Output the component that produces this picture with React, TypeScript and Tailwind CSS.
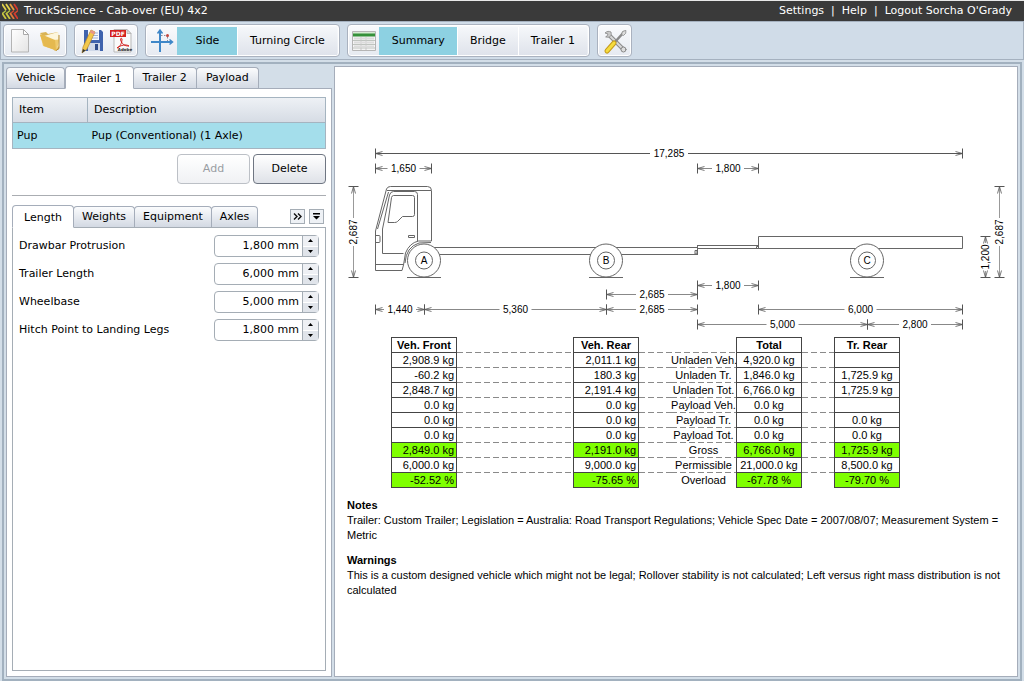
import type { ReactNode } from "react";
import clsx from "clsx";

const MAIN_TABS = ["Vehicle", "Trailer 1", "Trailer 2", "Payload"];
const DETAIL_TABS = ["Length", "Weights", "Equipment", "Axles"];

const LENGTHS = [
  { id: "drawbar", label: "Drawbar Protrusion", value: "1,800 mm" },
  { id: "length", label: "Trailer Length", value: "6,000 mm" },
  { id: "wheelbase", label: "Wheelbase", value: "5,000 mm" },
  { id: "hitch", label: "Hitch Point to Landing Legs", value: "1,800 mm" },
];

interface LoadRow {
  label: string;
  front: string;
  rear: string;
  total: string;
  trailer: string;
  ok?: boolean;
}

const LOADS: LoadRow[] = [
  { label: "Unladen Veh.", front: "2,908.9 kg", rear: "2,011.1 kg", total: "4,920.0 kg", trailer: "" },
  { label: "Unladen Tr.", front: "-60.2 kg", rear: "180.3 kg", total: "1,846.0 kg", trailer: "1,725.9 kg" },
  { label: "Unladen Tot.", front: "2,848.7 kg", rear: "2,191.4 kg", total: "6,766.0 kg", trailer: "1,725.9 kg" },
  { label: "Payload Veh.", front: "0.0 kg", rear: "0.0 kg", total: "0.0 kg", trailer: "" },
  { label: "Payload Tr.", front: "0.0 kg", rear: "0.0 kg", total: "0.0 kg", trailer: "0.0 kg" },
  { label: "Payload Tot.", front: "0.0 kg", rear: "0.0 kg", total: "0.0 kg", trailer: "0.0 kg" },
  { label: "Gross", front: "2,849.0 kg", rear: "2,191.0 kg", total: "6,766.0 kg", trailer: "1,725.9 kg", ok: true },
  { label: "Permissible", front: "6,000.0 kg", rear: "9,000.0 kg", total: "21,000.0 kg", trailer: "8,500.0 kg" },
  { label: "Overload", front: "-52.52 %", rear: "-75.65 %", total: "-67.78 %", trailer: "-79.70 %", ok: true },
];

/* ─── Icons ─── */

function Logo() {
  return (
    <svg className="h-4 w-4" viewBox="0 0 16 16" fill="none" strokeWidth="1.800">
      <path d="M0 1l4 6M4 1l4 6" stroke="#e3d24a" />
      <path d="M8 1l4 6" stroke="#e89a3c" />
      <path d="M12 1l4 6" stroke="#d8392f" />
      <path d="M4 7.500l-3.500 3M8 7.500l-3.500 3" stroke="#b5c542" strokeWidth="1.400" />
      <path d="M12 7.500l-3.500 3M16 7.500l-3.500 3" stroke="#d8492f" strokeWidth="1.400" />
      <path d="M0 10l4 6M4 10l4 6" stroke="#c9c640" />
      <path d="M8 10l4 6" stroke="#e0793a" />
      <path d="M12 10l4 6" stroke="#d8392f" />
    </svg>
  );
}

function NewIcon() {
  return (
    <svg className="h-7 w-6" viewBox="0 0 24 28">
      <defs>
        <linearGradient id="page" x1="0" y1="0" x2="1" y2="1">
          <stop offset="0" stopColor="#fff" />
          <stop offset="1" stopColor="#e4e4e4" />
        </linearGradient>
      </defs>
      <path d="M2.500 2.500h12l5 5v17.500h-17z" fill="url(#page)" stroke="#b4b4b4" />
      <path d="M14.500 2.500v5h5z" fill="#fff" stroke="#a8a8a8" />
    </svg>
  );
}

function OpenIcon() {
  return (
    <svg className="h-7 w-6" viewBox="0 0 24 28">
      <path d="M2 6l6-1 2 2 10-2 1 17-4 2z" fill="#d9b356" />
      <path d="M6 9l14-4 1 14-4 4z" fill="#fdf6dc" />
      <path d="M2 7l3 12 14 4.500 2-11-12 1-3-5z" fill="#efca6b" />
      <path d="M2 8l4 11 12 4.500L17 13 5 8z" fill="#e5b94f" />
      <path d="M18 23.500l3-2V8" fill="none" stroke="#b98c2c" />
    </svg>
  );
}

function SaveIcon() {
  return (
    <svg className="h-7 w-6" viewBox="0 0 24 28">
      <path d="M4 3h17l2 2v19H4z" fill="#3f63ad" />
      <path d="M8 3h11v10H8z" fill="#f5f8fd" />
      <path d="M9 6h9M9 8.500h9M9 11h9" stroke="#9fb2d6" />
      <path d="M8 16h12v8H8z" fill="#cfd8e8" />
      <path d="M15 17h3v6h-3z" fill="#2f4c8a" />
      <path d="M11 3l4 2-8 17-5 4 1-6z" fill="#f2c84b" stroke="#b9872a" strokeWidth=".7" />
      <path d="M11 3l4 2-1 2.500-4-2z" fill="#e9968a" />
      <path d="M2 26l1-4 2.500 1.500z" fill="#333" />
    </svg>
  );
}

function PdfIcon() {
  return (
    <svg className="h-7 w-6" viewBox="0 0 24 28">
      <path d="M5 2.500h13l4 4v18.500H5z" fill="#fafafa" stroke="#b9b9b9" />
      <path d="M18 2.500v4h4z" fill="#ddd" stroke="#aaa" strokeWidth=".7" />
      <path d="M1 3h16v7H1z" fill="#d3201f" />
      <text x="9" y="9" textAnchor="middle" fontSize="6" fontWeight="bold" fill="#fff">PDF</text>
      <path d="M8 21c3-1 5-5 5-9-1-2-2 0-1 2 2 4 4 5 8 5-3-2-8-1-12 2z" fill="none" stroke="#d3201f" />
      <text x="16" y="24" textAnchor="middle" fontSize="4" fontWeight="bold" fill="#222">Adobe</text>
    </svg>
  );
}

function AxesIcon() {
  return (
    <svg className="h-7 w-6" viewBox="0 0 24 28" fill="none">
      <path d="M9 4v21M0 15h21" stroke="#3f87c8" strokeWidth="2" />
      <path d="M6.500 6.500L9 3 11.500 6.500M18.500 12.500l3 2.500-3 2.500" stroke="#3f87c8" strokeWidth="1.500" />
      <path d="M10 8.500h6M16.500 10v4" stroke="#8c8c9c" strokeDasharray="1.500 1.500" />
      <circle cx="16.500" cy="8.500" r="1.500" fill="#c4453c" />
    </svg>
  );
}

function SheetIcon() {
  return (
    <svg className="h-7 w-6" viewBox="0 0 24 28">
      <path d="M.5 4.500h23v19H.5z" fill="#f4f4f4" stroke="#b5b5b5" />
      <path d="M1 5h22v2H1z" fill="#d5ead2" />
      <path d="M1 6.500h22v3H1z" fill="#35913a" />
      <path d="M1 13.500h22M1 17.500h22M1 21h22" stroke="#bfc4bf" />
      <path d="M9 10v13M14 10v13" stroke="#c6c6c6" />
      <path d="M2 11.500h20M2 15.500h20M2 19.500h20" stroke="#dcdcdc" strokeWidth="2" />
    </svg>
  );
}

function ToolsIcon() {
  return (
    <svg className="h-7 w-6" viewBox="0 0 24 28" fill="none" strokeLinecap="round">
      <path d="M7 9l13 13" stroke="#8b8b8b" strokeWidth="4" />
      <path d="M7 9l13 13" stroke="#d9d9d9" strokeWidth="2" />
      <path d="M3 10c4 1 6-1 5-5-2-1-4-1-6 1l3 1-1 2z" fill="#c9c9c9" stroke="#888" strokeWidth=".8" />
      <circle cx="20.500" cy="22.500" r="2.500" fill="#ddd" stroke="#888" />
      <path d="M21 5l-9 10" stroke="#8a8a8a" strokeWidth="2.500" />
      <path d="M22.500 3.500l-3 1-1 3 2 1 2-2z" fill="#ddd" stroke="#888" strokeWidth=".8" />
      <path d="M11 16l-7 8" stroke="#c59a1d" strokeWidth="5" />
      <path d="M11 16l-7 8" stroke="#f5dc3e" strokeWidth="3" />
    </svg>
  );
}

/* ─── Toolbar ─── */

function ToolGroup({ children }: { children: ReactNode }) {
  return (
    <div className="flex h-[33px] items-center rounded border border-[#aab2bf] bg-gradient-to-b from-[#fafbfd] to-[#e6eaf1] px-0.5 shadow-[inset_0_0_0_1px_#fff]">
      {children}
    </div>
  );
}

function IconButton({ label, children }: { label: string; children: ReactNode }) {
  return (
    <button type="button" aria-label={label} className="flex h-7 w-[29px] items-center justify-center">
      {children}
    </button>
  );
}

function ViewButton({ label, active }: { label: string; active?: boolean }) {
  return (
    <button
      type="button"
      className={clsx(
        "h-[28px] min-w-[60px] border-l px-3",
        active ? "border-[#8dd1e2] bg-[#8dd1e2]" : "border-white bg-gradient-to-b from-[#f5f7fa] to-[#dfe3eb]",
      )}
    >
      {label}
    </button>
  );
}

/* ─── Left panel ─── */

function Tab({ label, active, compact }: { label: string; active?: boolean; compact?: boolean }) {
  return (
    <button
      type="button"
      role="tab"
      aria-selected={!!active}
      className={clsx(
        "rounded-t border border-[#a5adba]",
        active
          ? "z-10 -mb-px h-[23px] border-b-white bg-white px-[11px] pt-0.5"
          : "-ml-px h-[21px] border-b-0 bg-gradient-to-b from-[#fbfcfd] to-[#d3d9e3] first:ml-0",
        !active && (compact ? "px-2" : "px-[9px]"),
      )}
    >
      {label}
    </button>
  );
}

function NumberField({ id, label, value }: { id: string; label: string; value: string }) {
  return (
    <div className="flex h-[22px] items-center justify-between">
      <label htmlFor={id}>{label}</label>
      <div className="flex h-[22px] w-[105px] rounded-sm border border-[#a5adb5] bg-white">
        <input id={id} defaultValue={value} className="w-0 min-w-0 flex-1 pr-[3px] text-right outline-none" />
        <div className="flex w-4 flex-col border-l border-[#a5adb5] bg-[#eef0f4]">
          <button type="button" aria-label={`Increase ${label}`} className="flex flex-1 items-center justify-center border-b border-white">
            <svg className="h-[3px] w-[5px]" viewBox="0 0 5 3"><path d="M0 3h5L2.500 0z" /></svg>
          </button>
          <button type="button" aria-label={`Decrease ${label}`} className="flex flex-1 items-center justify-center bg-[#e0e4ea]">
            <svg className="h-[3px] w-[5px]" viewBox="0 0 5 3"><path d="M0 0h5L2.500 3z" /></svg>
          </button>
        </div>
      </div>
    </div>
  );
}

function TrailerPanel() {
  return (
    <section className="flex flex-col">
      <div role="tablist" className="flex h-[22px] items-end">
        {MAIN_TABS.map((tab) => (
          <Tab key={tab} label={tab} active={tab === "Trailer 1"} />
        ))}
      </div>

      <div className="flex flex-1 flex-col border border-[#a5adba] bg-white px-[5px] pt-2 pb-[5px]">
        <table className="w-full border border-[#a5b4c0] text-left">
          <thead>
            <tr className="h-[25px] bg-gradient-to-b from-[#eef1f5] to-[#d5dbe4]">
              <th className="w-[75px] border-r border-b border-[#a5b4c0] pl-[6px] font-normal">Item</th>
              <th className="border-b border-[#a5b4c0] pl-[6px] font-normal">Description</th>
            </tr>
          </thead>
          <tbody>
            <tr className="h-[26px] bg-[#a4deeb]">
              <td className="pl-1">Pup</td>
              <td className="pl-1">Pup (Conventional) (1 Axle)</td>
            </tr>
          </tbody>
        </table>

        <div className="mt-[5px] flex justify-end gap-[3px]">
          <button type="button" disabled className="h-[30px] w-[73px] rounded-sm border border-[#bcc0c6] bg-gradient-to-b from-white to-[#f0f1f4] text-[#9a9da3]">
            Add
          </button>
          <button type="button" className="h-[30px] w-[73px] rounded-sm border border-[#6f7682] bg-gradient-to-b from-white to-[#dfe2e8]">
            Delete
          </button>
        </div>

        <hr className="mt-[11px] border-[#aaadb2]" />

        <div className="mt-[9px] flex h-[22px] items-end">
          <div role="tablist" className="flex items-end">
            {DETAIL_TABS.map((tab) => (
              <Tab key={tab} label={tab} active={tab === "Length"} compact />
            ))}
          </div>
          <div className="mr-[2px] mb-[3px] ml-auto flex gap-1">
            <button type="button" aria-label="More tabs" className="flex h-[15px] w-[15px] items-center justify-center border border-[#a5adb5] bg-[#eef1f5]">
              <svg className="h-[7px] w-[9px]" viewBox="0 0 9 7" fill="none" stroke="#111" strokeWidth="1.400">
                <path d="M1 .5l3 3-3 3M5 .5l3 3-3 3" />
              </svg>
            </button>
            <button type="button" aria-label="Tab list" className="flex h-[15px] w-[15px] items-center justify-center border border-[#a5adb5] bg-[#eef1f5]">
              <svg className="h-[7px] w-[7px]" viewBox="0 0 7 7"><path d="M0 0h7v1.500H0zM0 3h7L3.500 6.500z" /></svg>
            </button>
          </div>
        </div>

        <div className="flex flex-1 flex-col gap-[6px] border border-[#a5adb5] px-[6px] pt-[7px]">
          {LENGTHS.map((f) => (
            <NumberField key={f.id} {...f} />
          ))}
        </div>
      </div>
    </section>
  );
}

/* ─── Drawing ─── */

interface DimProps {
  from: number;
  to: number;
  at: number;
  label: string;
  color?: string;
}

// Horizontal dimension line with open arrow heads, broken round its label
function Dim({ from, to, at, label, color = "#888" }: DimProps) {
  const mid = (from + to) / 2;
  const half = label.length * 3 + 1;
  return (
    <g fill="none" stroke={color}>
      <path d={`M${from} ${at}H${mid - half}M${mid + half} ${at}H${to}`} />
      <path d={`M${from} ${at - 5}v10M${to} ${at - 5}v10`} stroke="#555" />
      <path d={`M${from + 7} ${at - 2}L${from} ${at}l7 2M${to - 7} ${at - 2}L${to} ${at}l-7 2`} stroke="#555" strokeWidth=".8" />
      <text x={mid} y={at + 3.5} textAnchor="middle" fill="#000" stroke="none">{label}</text>
    </g>
  );
}

function VDim({ from, to, at, label }: DimProps) {
  const mid = (from + to) / 2;
  const half = label.length * 3 - 1;
  return (
    <g fill="none" stroke="#999">
      <path d={`M${at} ${from}V${mid - half}M${at} ${mid + half}V${to}`} />
      <path d={`M${at - 5} ${from}h10M${at - 5} ${to}h10`} stroke="#555" />
      <path d={`M${at - 2} ${from + 7}L${at} ${from}l2 7M${at - 2} ${to - 7}L${at} ${to}l2-7`} stroke="#555" strokeWidth=".8" />
      <text transform={`translate(${at + 3} ${mid}) rotate(-90)`} textAnchor="middle" fill="#000" stroke="none">{label}</text>
    </g>
  );
}

function Wheel({ cx, name }: { cx: number; name: string }) {
  return (
    <g fill="#fff" stroke="#666">
      <circle cx={cx} cy="260.5" r="16.500" />
      <circle cx={cx} cy="260.5" r="8.500" />
      <path d={`M${cx - 17} 277.500h34`} />
      <text x={cx} y="264" textAnchor="middle" fill="#000" stroke="none">{name}</text>
    </g>
  );
}

function TruckDrawing() {
  return (
    <svg width="682" height="270" viewBox="335 67 682 270" className="block font-[Liberation_Sans,Arial,sans-serif] text-[10px]">
      <Dim from={375.5} to={962.5} at={153.5} label="17,285" color="#555" />
      <Dim from={375.5} to={431.5} at={168.5} label="1,650" />
      <Dim from={697.5} to={758.5} at={168.5} label="1,800" />

      {/* Cab */}
      <g fill="none" stroke="#666">
        <path d="M375.500 270.500V231l11-42q1-2.500 4-2.500h37q4 0 4 4v50.500h-13q-9 2-13 12l-2 12-1.500 5.500z" />
        <path d="M375.500 264.500h28M387 190.500h44M377.500 229l11-37" />
        <path d="M382.500 253.500V229l7-34q1-3.500 4-3.500h21q3 0 3 3v47M382.500 253.500h21" />
        <path d="M393.500 195.500h19q2 0 2 2v17q0 2-2 2h-10l-5 5q-1 1-3 1h-6.500l3.500-25q.5-2 2-2z" />
        <path d="M408.500 235.500h6v2h-6zM375.500 235.500h3.500q1 0 1 1v5q0 1-1 1h-3.500" />
        <path d="M405 263q1-16 14-20l12-.5" />
      </g>

      {/* Chassis, drawbar and trailer deck */}
      <g fill="none" stroke="#666">
        <path d="M434 247.500h263M439 254.500h258M697.500 245v10M695 250.500h2v3.500h-2z" />
        <path d="M697.500 245.500h61v3h-61zM756.500 246.500h2v2h-2z" />
        <path d="M758.500 236.500h204v12h-204z" />
      </g>
      <Wheel cx={424} name="A" />
      <Wheel cx={606} name="B" />
      <Wheel cx={867} name="C" />

      <VDim from={186.5} to={277.5} at={353.5} label="2,687" />
      <VDim from={236.5} to={277.5} at={985.5} label="1,200" />
      <VDim from={186.5} to={277.5} at={999.5} label="2,687" />

      <Dim from={697.5} to={758.5} at={285.5} label="1,800" />
      <Dim from={606.5} to={697.5} at={294.5} label="2,685" />
      <Dim from={375.5} to={424.5} at={309.5} label="1,440" />
      <Dim from={424.5} to={606.5} at={309.5} label="5,360" />
      <Dim from={606.5} to={697.5} at={309.5} label="2,685" />
      <Dim from={758.5} to={962.5} at={309.5} label="6,000" />
      <Dim from={697.5} to={867.5} at={324.5} label="5,000" />
      <Dim from={867.5} to={962.5} at={324.5} label="2,800" />
    </svg>
  );
}

const DASHES =
  "bg-[linear-gradient(90deg,#8a8a8a_0_6px,transparent_6px_9px)] bg-[length:9px_1px] bg-bottom-left bg-repeat-x";
const CELL = "h-[15px] border-x border-b border-[#444] p-0";

function LoadTable() {
  return (
    <table className="ml-14 w-[509px] table-fixed border-separate border-spacing-0 text-center text-[11px] leading-[14px]">
      <colgroup>
        <col className="w-[66px]" />
        <col className="w-[116px]" />
        <col className="w-[66px]" />
        <col className="w-[32px]" />
        <col className="w-[65px]" />
        <col className="w-[66px]" />
        <col className="w-[32px]" />
        <col className="w-[66px]" />
      </colgroup>
      <thead>
        <tr>
          <th className={clsx(CELL, "border-t")}>Veh. Front</th>
          <td className={DASHES} />
          <th className={clsx(CELL, "border-t")}>Veh. Rear</th>
          <td colSpan={2} className={DASHES} />
          <th className={clsx(CELL, "border-t")}>Total</th>
          <td className={DASHES} />
          <th className={clsx(CELL, "border-t")}>Tr. Rear</th>
        </tr>
      </thead>
      <tbody>
        {LOADS.map((row, i) => {
          const gap = clsx("p-0 pb-px", i < LOADS.length - 1 && DASHES);
          const cell = clsx(CELL, row.ok && "bg-[#7fff00]");
          return (
            <tr key={row.label}>
              <td className={clsx(cell, "pr-0.5 text-right")}>{row.front}</td>
              <td className={gap} />
              <td className={clsx(cell, "pr-0.5 text-right")}>{row.rear}</td>
              <td className={gap} />
              <th className={clsx(gap, "font-normal whitespace-nowrap")}>{row.label}</th>
              <td className={cell}>{row.total}</td>
              <td className={gap} />
              <td className={cell}>{row.trailer}</td>
            </tr>
          );
        })}
      </tbody>
    </table>
  );
}

function SummaryPanel() {
  return (
    <section className="min-w-0 border border-[#a5adba] bg-white font-[Liberation_Sans,Arial,sans-serif] text-[11px] leading-[15px]">
      <div className="mx-auto w-fit">
        <TruckDrawing />
        <LoadTable />
      </div>
      <div className="mt-[10px] flex flex-col gap-[10px] px-3">
        <div>
          <h2 className="font-bold">Notes</h2>
          <p>
            Trailer: Custom Trailer; Legislation = Australia: Road Transport Regulations; Vehicle Spec Date = 2007/08/07;
            Measurement System = Metric
          </p>
        </div>
        <div>
          <h2 className="font-bold">Warnings</h2>
          <p>
            This is a custom designed vehicle which might not be legal; Rollover stability is not calculated; Left versus
            right mass distribution is not calculated
          </p>
        </div>
      </div>
    </section>
  );
}

export default function App() {
  return (
    <div className="flex min-h-screen flex-col bg-[#d3dee8] font-[Verdana,DejaVu_Sans,sans-serif] text-[11px] leading-[18px] text-black">
      <header className="flex h-[21px] items-center border-t border-[#e8e8e8] bg-[#3a3a3a] px-[2px] text-white">
        <Logo />
        <h1 className="ml-[6px]">TruckScience - Cab-over (EU) 4x2</h1>
        <nav className="mr-[10px] ml-auto flex gap-[7px]">
          <a href="#settings">Settings</a>
          <span>|</span>
          <a href="#help">Help</a>
          <span>|</span>
          <a href="#logout">Logout Sorcha O'Grady</a>
        </nav>
      </header>

      <div className="flex h-[39px] items-center gap-[7px] border border-[#a5b1bf] bg-[#d0dce8] px-[2px]">
        <ToolGroup>
          <IconButton label="New"><NewIcon /></IconButton>
          <IconButton label="Open"><OpenIcon /></IconButton>
        </ToolGroup>
        <ToolGroup>
          <IconButton label="Save"><SaveIcon /></IconButton>
          <IconButton label="Export PDF"><PdfIcon /></IconButton>
        </ToolGroup>
        <ToolGroup>
          <IconButton label="Views"><AxesIcon /></IconButton>
          <ViewButton label="Side" active />
          <ViewButton label="Turning Circle" />
        </ToolGroup>
        <ToolGroup>
          <IconButton label="Reports"><SheetIcon /></IconButton>
          <ViewButton label="Summary" active />
          <ViewButton label="Bridge" />
          <ViewButton label="Trailer 1" />
        </ToolGroup>
        <ToolGroup>
          <IconButton label="Tools"><ToolsIcon /></IconButton>
        </ToolGroup>
      </div>

      <main className="mx-[2px] mt-[2px] grid flex-1 grid-cols-[326px_1fr] gap-[2px] border-2 border-[#a2b1bf] p-[2px]">
        <TrailerPanel />
        <SummaryPanel />
      </main>
    </div>
  );
}
